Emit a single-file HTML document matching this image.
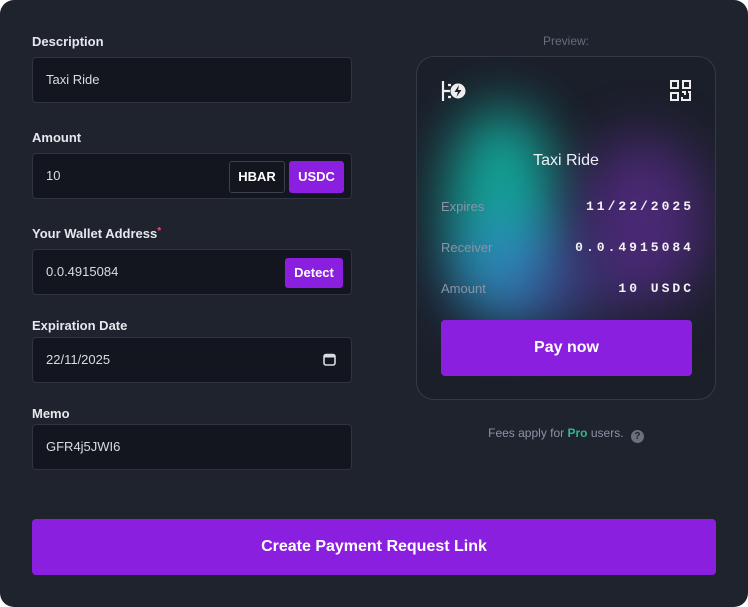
<!DOCTYPE html>
<html><head><meta charset="utf-8"><style>
*{box-sizing:border-box;margin:0;padding:0}
html,body{width:748px;height:607px;background:#fff;overflow:hidden;font-family:"Liberation Sans",sans-serif}
.wrap{position:absolute;left:0;top:0;width:748px;height:607px;background:#1e232d;border-radius:14px;overflow:hidden}
.lbl{position:absolute;left:32px;color:#e6e8ec;font-weight:bold;font-size:13px}
.inp{position:absolute;left:32px;width:320px;height:46px;background:#13161e;border:1px solid #2f3540;border-radius:4px;color:#d8dbe0;font-size:13px;padding-left:13px;line-height:44px}
.btn{position:absolute;border-radius:3px;font-weight:bold;font-size:13px;color:#fff;text-align:center}
.card{position:absolute;left:416px;top:56px;width:300px;height:344px;border:1px solid #333a46;border-radius:18px;overflow:hidden;background:#1b1f2a}
.g{position:absolute;border-radius:50%;filter:blur(28px)}
.row{position:absolute;left:24px;right:24px;font-size:13px}
.row .k{color:#8b93a6;position:absolute;left:0}
.row .v{color:#f2f2f5;position:absolute;right:-3px;font-family:"Liberation Mono",monospace;font-weight:bold;letter-spacing:3px;font-size:13px}
</style></head><body><div class="wrap">
<div class="lbl" style="top:34px">Description</div>
<div class="inp" style="top:57px">Taxi Ride</div>
<div class="lbl" style="top:130px">Amount</div>
<div class="inp" style="top:153px">10</div>
<div class="btn" style="left:229px;top:161px;width:56px;height:32px;line-height:30px;border:1px solid #3a404c;background:#13161e">HBAR</div>
<div class="btn" style="left:289px;top:161px;width:55px;height:32px;line-height:32px;background:#8a1fe0">USDC</div>
<div class="lbl" style="top:226px">Your Wallet Address<span style="color:#e8506a;font-size:10px;vertical-align:top">*</span></div>
<div class="inp" style="top:249px">0.0.4915084</div>
<div class="btn" style="left:285px;top:258px;width:58px;height:30px;line-height:30px;background:#8a1fe0">Detect</div>
<div class="lbl" style="top:318px">Expiration Date</div>
<div class="inp" style="top:337px">22/11/2025</div>
<svg style="position:absolute;left:323px;top:353px" width="13" height="13" viewBox="0 0 13 13"><rect x="1" y="1.5" width="11" height="10.5" rx="2" fill="none" stroke="#d8dbe0" stroke-width="1.6"/><rect x="1" y="1.5" width="11" height="3" fill="#d8dbe0"/></svg>
<div class="lbl" style="top:406px">Memo</div>
<div class="inp" style="top:424px">GFR4j5JWI6</div>
<div class="btn" style="left:32px;top:519px;width:684px;height:56px;line-height:56px;background:#8a1fe0;font-size:16px;border-radius:4px">Create Payment Request Link</div>

<div style="position:absolute;left:416px;width:300px;top:34px;text-align:center;color:#666d7b;font-size:12px">Preview:</div>
<div class="card">
<div class="g" style="left:30px;top:50px;width:110px;height:190px;background:#12b8a8;opacity:.85"></div>
<div class="g" style="left:35px;top:160px;width:120px;height:110px;background:#3a86d4;opacity:.65"></div>
<div class="g" style="left:160px;top:80px;width:130px;height:170px;background:#5a2c8e;opacity:.75"></div>
<div class="g" style="left:110px;top:190px;width:90px;height:80px;background:#4a3f9a;opacity:.5"></div>
<svg style="position:absolute;left:24px;top:23px" width="26" height="22" viewBox="0 0 26 22"><path d="M2 1V21M2 11H9M7 5H10M7 17H10" stroke="#eee" stroke-width="2.2" fill="none"/><circle cx="17" cy="11" r="7.5" fill="#eee"/><path d="M18 5L13.5 12H17L15.5 17L20.5 10H17Z" fill="#1b1f2a"/></svg>
<svg style="position:absolute;left:253px;top:23px" width="21" height="21" viewBox="0 0 21 21" fill="none" stroke="#eee" stroke-width="2"><rect x="1" y="1" width="7" height="7"/><rect x="13" y="1" width="7" height="7"/><rect x="1" y="13" width="7" height="7"/><path d="M12 12H15V15M18 12H20V20H12V17"/></svg>
<div style="position:absolute;left:0;right:0;top:95px;text-align:center;color:#f0f0f4;font-size:16px">Taxi Ride</div>
<div class="row" style="top:142px"><span class="k">Expires</span><span class="v">11/22/2025</span></div>
<div class="row" style="top:183px"><span class="k">Receiver</span><span class="v">0.0.4915084</span></div>
<div class="row" style="top:224px"><span class="k">Amount</span><span class="v">10 USDC</span></div>
<div class="btn" style="left:24px;top:263px;width:251px;height:56px;line-height:56px;background:#8a1fe0;font-size:16px;border-radius:4px">Pay now</div>
</div>
<div style="position:absolute;left:416px;width:300px;top:426px;text-align:center;color:#8b93a6;font-size:12px">Fees apply for <span style="color:#2eb88a;font-weight:bold">Pro</span> users. <span style="display:inline-block;width:13px;height:13px;border-radius:50%;background:#6a707c;color:#1e232d;font-size:10px;line-height:13px;font-weight:bold;vertical-align:-2px;margin-left:4px">?</span></div>
</div></body></html>
